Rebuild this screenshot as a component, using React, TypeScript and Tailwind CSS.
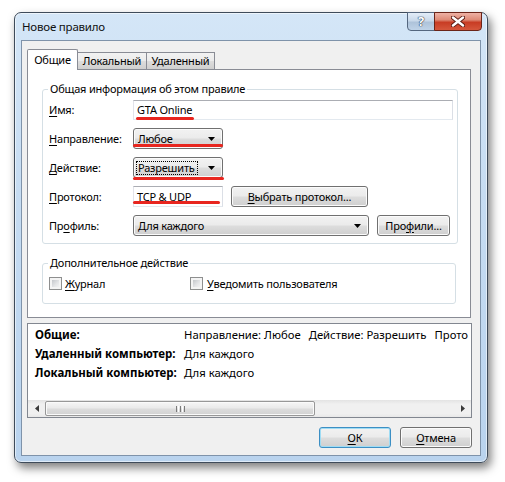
import React from "react";

const btnBg =
  "bg-[linear-gradient(to_bottom,#f2f2f2_0%,#ebebeb_48%,#dddddd_52%,#cfcfcf_100%)]";

function U({ children }: { children: React.ReactNode }) {
  return <span className="underline underline-offset-[2px] decoration-[1px]">{children}</span>;
}

function Arrow() {
  return (
    <svg width="7" height="4" viewBox="0 0 7 4" className="block">
      <path d="M0 0H7L3.5 4Z" fill="#000" />
    </svg>
  );
}

function RedLine({ cls }: { cls: string }) {
  return <div className={`absolute h-[3px] rounded-full bg-[#e8261f] ${cls}`} />;
}

function Dropdown({ text, cls, focus }: { text: string; cls: string; focus?: boolean }) {
  return (
    <div
      className={`relative h-[21px] ${cls} border border-[#707070] rounded-[3px] ${btnBg} shadow-[inset_0_0_0_1px_#fbfbfb] flex items-center pl-[2px] pr-[7px]`}
    >
      <span className="flex-1 leading-[14px]">
        {focus ? (
          <span className="border border-dotted border-[#000] pl-[1px] pr-[2px] inline-block leading-[12px]">{text}</span>
        ) : (
          <span className="pl-[2px]">{text}</span>
        )}
      </span>
      <Arrow />
    </div>
  );
}

function Button({ children, cls, def }: { children: React.ReactNode; cls: string; def?: boolean }) {
  return (
    <div
      className={`h-[21px] ${cls} rounded-[3px] ${btnBg} flex items-center justify-center ${
        def
          ? "border border-[#3c8fc4] shadow-[inset_0_0_0_1px_#9fdcf4]"
          : "border border-[#707070] shadow-[inset_0_0_0_1px_#fbfbfb]"
      }`}
    >
      {children}
    </div>
  );
}

function Checkbox() {
  return (
    <div className="w-[13px] h-[13px] border border-[#8e8f8f] bg-[#f4f4f4] p-[2px]">
      <div className="w-full h-full bg-[linear-gradient(135deg,#c4c7cb_0%,#e4e5e7_60%,#f2f2f3_100%)]" />
    </div>
  );
}

function Row({ label, children }: { label: React.ReactNode; children: React.ReactNode }) {
  return (
    <div className="relative flex items-center h-[21px]">
      <div className="w-[84px] shrink-0">{label}</div>
      {children}
    </div>
  );
}

export default function App() {
  return (
    <div className="w-[505px] h-[482px] bg-white pt-[12px] pl-[14px] text-[11px] tracking-[-0.2px] text-black font-['Noto_Sans',sans-serif] leading-[16px] overflow-hidden">
      <div className="relative w-[474px] h-[451px] rounded-[7px] border border-[#3e4b5a] bg-[linear-gradient(to_bottom,#d4e6f7_0%,#c6dcf2_40%,#b9d3ee_100%)] shadow-[3px_5px_10px_rgba(0,0,0,0.5),inset_0_0_0_1px_rgba(255,255,255,0.55)] flex flex-col">
        {/* title bar */}
        <div className="h-[27px] shrink-0 pl-[7px] pt-[5px]">
          <span className="text-[11.5px] text-[#111] leading-[18px]">Новое правило</span>
        </div>
        <div className="absolute top-[-1px] right-[5px] flex h-[19px]">
          <div className="w-[28px] h-[19px] border border-[#55677f] rounded-bl-[4px] bg-[linear-gradient(to_bottom,#e3edf8_0%,#c9d9ea_45%,#aec3da_55%,#bfd3e8_100%)] flex items-center justify-center">
            <span className="text-white font-bold text-[13px] leading-[13px] [text-shadow:0_0_1px_#2a3a50,0_0_1px_#2a3a50,0_0_1px_#2a3a50]">?</span>
          </div>
          <div className="w-[48px] h-[19px] -ml-[1px] border border-[#6b2418] rounded-br-[4px] bg-[linear-gradient(to_bottom,#eeb1a4_0%,#de8a76_40%,#c83c24_55%,#d5573c_100%)] flex items-center justify-center">
            <svg width="14" height="11" viewBox="0 0 14 11">
              <path d="M2 1.5L12 9.5M12 1.5L2 9.5" stroke="#5a1b12" strokeWidth="4.2" strokeLinecap="round" />
              <path d="M2 1.5L12 9.5M12 1.5L2 9.5" stroke="#fff" strokeWidth="2.4" strokeLinecap="round" />
            </svg>
          </div>
        </div>

        {/* client */}
        <div className="flex-1 mx-[6px] mb-[6px] border border-[#7f93aa] bg-[#f0f0f0] flex flex-col pl-[5px] pr-[8px] pt-[8px]">
          {/* tabs */}
          <div className="mr-[1px]">
            <div className="flex items-end h-[20px]">
              <div className="relative z-10 w-[51px] h-[21px] -mb-[1px] border border-b-0 border-[#898c95] bg-white rounded-t-[2px] flex items-center justify-center pb-[1px]">
                Общие
              </div>
              <div className="w-[69px] h-[17px] border border-b-0 border-l-0 border-[#898c95] bg-[linear-gradient(to_bottom,#f2f2f2_0%,#ebebeb_50%,#dddddd_51%,#cfcfcf_100%)] flex items-center justify-center">
                Локальный
              </div>
              <div className="w-[68px] h-[17px] border border-b-0 border-l-0 border-[#898c95] bg-[linear-gradient(to_bottom,#f2f2f2_0%,#ebebeb_50%,#dddddd_51%,#cfcfcf_100%)] flex items-center justify-center">
                Удаленный
              </div>
            </div>
            <div className="h-[249px] border border-[#898c95] bg-white pl-[14px] pr-[12px] pt-[19px]">
              {/* group 1 */}
              <div className="relative h-[155px] border border-[#d5dfe5] rounded-[3px] pl-[6px] pr-[4px] pt-[9px] flex flex-col gap-[8px]">
                <div className="absolute -top-[9px] left-[5px] bg-white px-[2px] leading-[16px]">
                  Общая информация об этом правиле
                </div>
                <Row label={<><U>И</U>мя:</>}>
                  <div className="flex-1 h-[20px] border border-[#abadb3] border-l-[#e2e3ea] border-r-[#dbdfe6] border-b-[#e3e9ef] bg-white flex items-center pl-[3px]">
                    GTA Online
                  </div>
                  <RedLine cls="top-[18px] left-[87px] w-[58px]" />
                </Row>
                <Row label={<><U>Н</U>аправление:</>}>
                  <Dropdown text="Любое" cls="w-[90px]" />
                  <RedLine cls="top-[16px] left-[84px] w-[90px]" />
                </Row>
                <Row label={<><U>Д</U>ействие:</>}>
                  <Dropdown text="Разрешить" cls="w-[90px]" focus />
                  <RedLine cls="top-[20px] left-[84px] w-[91px]" />
                </Row>
                <Row label={<><U>П</U>ротокол:</>}>
                  <div className="w-[90px] h-[21px] border border-[#abadb3] border-l-[#e2e3ea] border-r-[#dbdfe6] border-b-[#e3e9ef] bg-white flex items-center pl-[3px]">
                    TCP &amp; UDP
                  </div>
                  <RedLine cls="top-[15px] left-[84px] w-[87px]" />
                  <Button cls="w-[137px] ml-[8px]">
                    <span>
                      <U>В</U>ыбрать протокол...
                    </span>
                  </Button>
                </Row>
                <Row label={<>Пр<U>о</U>филь:</>}>
                  <Dropdown text="Для каждого" cls="w-[236px]" />
                  <Button cls="w-[73px] ml-[8px]">
                    <span>
                      Про<U>ф</U>или...
                    </span>
                  </Button>
                </Row>
              </div>
              {/* group 2 */}
              <div className="relative mt-[19px] mr-[2px] h-[41px] border border-[#d5dfe5] rounded-[3px] pl-[6px] pt-[13px] flex items-start">
                <div className="absolute -top-[9px] left-[5px] bg-white px-[2px] leading-[16px]">
                  Дополнительное действие
                </div>
                <div className="w-[141px] flex items-center">
                  <Checkbox />
                  <span className="ml-[3px] leading-[13px]">
                    <U>Ж</U>урнал
                  </span>
                </div>
                <div className="flex items-center">
                  <Checkbox />
                  <span className="ml-[4px] leading-[13px]">
                    <U>У</U>ведомить пользователя
                  </span>
                </div>
              </div>
            </div>
          </div>

          {/* info panel */}
          <div className="mt-[5px] h-[95px] border border-[#828790] bg-white flex flex-col text-[11.3px] tracking-normal">
            <div className="flex-1 pl-[7px] pt-[1px] overflow-hidden">
              <div className="flex h-[19px] items-center whitespace-nowrap">
                <div className="w-[149px] shrink-0 font-bold text-[11.5px]">Общие:</div>
                <div className="flex gap-[8px]">
                  <span>Направление: Любое</span>
                  <span>Действие: Разрешить</span>
                  <span>Прото</span>
                </div>
              </div>
              <div className="flex h-[19px] items-center whitespace-nowrap">
                <div className="w-[149px] shrink-0 font-bold text-[11.5px]">Удаленный компьютер:</div>
                <span>Для каждого</span>
              </div>
              <div className="flex h-[19px] items-center whitespace-nowrap">
                <div className="w-[149px] shrink-0 font-bold text-[11.5px]">Локальный компьютер:</div>
                <span>Для каждого</span>
              </div>
            </div>
            {/* scrollbar */}
            <div className="h-[17px] flex bg-[linear-gradient(to_bottom,#e3e3e3_0%,#f0f0f0_25%,#f0f0f0_80%,#e8e8e8_100%)]">
              <div className="w-[17px] flex items-center justify-center">
                <svg width="4" height="7" viewBox="0 0 4 7">
                  <path d="M4 0V7L0 3.5Z" fill="#3a3a3a" />
                </svg>
              </div>
              <div className="w-[270px] h-[17px] py-[1px]">
                <div className="h-full rounded-[2px] border border-[#979797] bg-[linear-gradient(to_bottom,#f6f6f6_0%,#eaeaea_45%,#dcdcdc_55%,#d2d2d2_100%)] shadow-[inset_0_0_0_1px_#fafafa] flex items-center justify-center">
                  <div className="flex gap-[1px]">
                    <div className="w-[1px] h-[6px] bg-[#7a7a7a]" />
                    <div className="w-[1px] h-[6px] bg-[#fff]" />
                    <div className="w-[1px] h-[6px] bg-[#7a7a7a]" />
                    <div className="w-[1px] h-[6px] bg-[#fff]" />
                    <div className="w-[1px] h-[6px] bg-[#7a7a7a]" />
                  </div>
                </div>
              </div>
              <div className="flex-1" />
              <div className="w-[17px] flex items-center justify-center">
                <svg width="4" height="7" viewBox="0 0 4 7">
                  <path d="M0 0V7L4 3.5Z" fill="#3a3a3a" />
                </svg>
              </div>
            </div>
          </div>

          {/* buttons */}
          <div className="mt-[9px] flex justify-end gap-[9px]">
            <Button cls="w-[72px]" def>
              <span>
                <U>О</U>К
              </span>
            </Button>
            <Button cls="w-[72px]">
              <span>
                <U>О</U>тмена
              </span>
            </Button>
          </div>
        </div>
      </div>
    </div>
  );
}
